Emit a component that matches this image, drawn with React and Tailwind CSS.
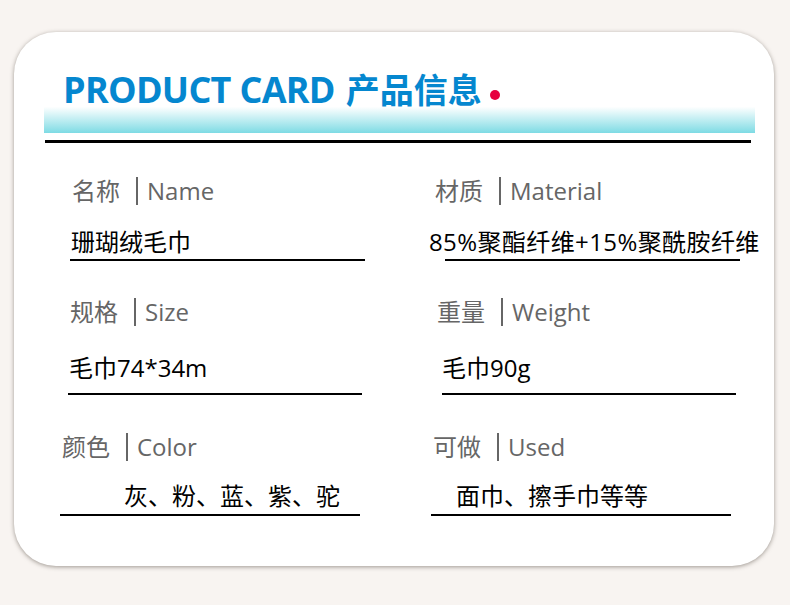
import React from "react";

const FONT = "font-['Open_Sans','Noto_Sans_CJK_SC',sans-serif]";

// one labelled field: label row, value row, underline
function Field({ cell, labelPad, zh, en, value, valueCls, lineCls }) {
    return (
        <div className={cell}>
            <div className={`flex items-center h-[32px] text-[24px] leading-[32px] text-[#666] ${labelPad}`}>
                <span>{zh}</span>
                <span className="ml-[16px] mr-[9px] w-[2px] h-[28px] bg-[#666]" />
                <span>{en}</span>
            </div>
            <div className={`h-[32px] leading-[32px] text-[24px] text-black whitespace-nowrap ${valueCls}`}>
                {value}
            </div>
            <div className={`h-[2px] bg-black ${lineCls}`} />
        </div>
    );
}

export default function App() {
    return (
        <div className={`w-[790px] h-[605px] bg-[#f8f4f1] pt-[32px] pl-[14px] ${FONT}`}>
            <div className="w-[760px] h-[534px] bg-white rounded-[42px] shadow-[0_1px_4px_rgba(70,60,50,0.5)] pt-[37px]">
                {/* Header */}
                <div className="ml-[30px] w-[711px] h-[64px] bg-[linear-gradient(to_bottom,transparent_59%,#ffffff_59%,#7edbe4_100%)]">
                    <div className="flex items-baseline pl-[19px] pt-[1px] h-[41px] leading-[40px] text-[#0587cf] font-bold">
                        <span className="text-[36px] tracking-[-0.7px]">PRODUCT CARD</span>
                        <span className="ml-[11px] text-[34px]">产品信息</span>
                        <span className="ml-[8px] w-[10px] h-[10px] rounded-full bg-[#e6003e] self-center translate-y-[5px]" />
                    </div>
                </div>
                <div className="ml-[31px] mt-[7px] w-[706px] h-[3px] bg-black" />

                {/* Row 1 */}
                <div className="flex mt-[32px]">
                    <Field
                        cell="w-[380px]"
                        labelPad="pl-[58px]"
                        zh="名称"
                        en="Name"
                        value="珊瑚绒毛巾"
                        valueCls="pl-[57px] mt-[19px]"
                        lineCls="ml-[56px] w-[295px] mt-[1px]"
                    />
                    <Field
                        cell="flex-1"
                        labelPad="pl-[41px]"
                        zh="材质"
                        en="Material"
                        value="85%聚酯纤维+15%聚酰胺纤维"
                        valueCls="pl-[35px] mt-[19px] tracking-[0.4px]"
                        lineCls="ml-[51px] w-[295px] mt-[1px]"
                    />
                </div>

                {/* Row 2 */}
                <div className="flex mt-[35px]">
                    <Field
                        cell="w-[380px]"
                        labelPad="pl-[56px]"
                        zh="规格"
                        en="Size"
                        value="毛巾74*34m"
                        valueCls="pl-[55px] mt-[24px]"
                        lineCls="ml-[54px] w-[294px] mt-[9px]"
                    />
                    <Field
                        cell="flex-1"
                        labelPad="pl-[43px]"
                        zh="重量"
                        en="Weight"
                        value="毛巾90g"
                        valueCls="pl-[48px] mt-[24px]"
                        lineCls="ml-[48px] w-[294px] mt-[9px]"
                    />
                </div>

                {/* Row 3 */}
                <div className="flex mt-[36px]">
                    <Field
                        cell="w-[380px]"
                        labelPad="pl-[48px]"
                        zh="颜色"
                        en="Color"
                        value="灰、粉、蓝、紫、驼"
                        valueCls="pl-[110px] mt-[17px]"
                        lineCls="ml-[46px] w-[300px] mt-[2px]"
                    />
                    <Field
                        cell="flex-1"
                        labelPad="pl-[39px]"
                        zh="可做"
                        en="Used"
                        value="面巾、擦手巾等等"
                        valueCls="pl-[62px] mt-[17px]"
                        lineCls="ml-[37px] w-[300px] mt-[2px]"
                    />
                </div>
            </div>
        </div>
    );
}
